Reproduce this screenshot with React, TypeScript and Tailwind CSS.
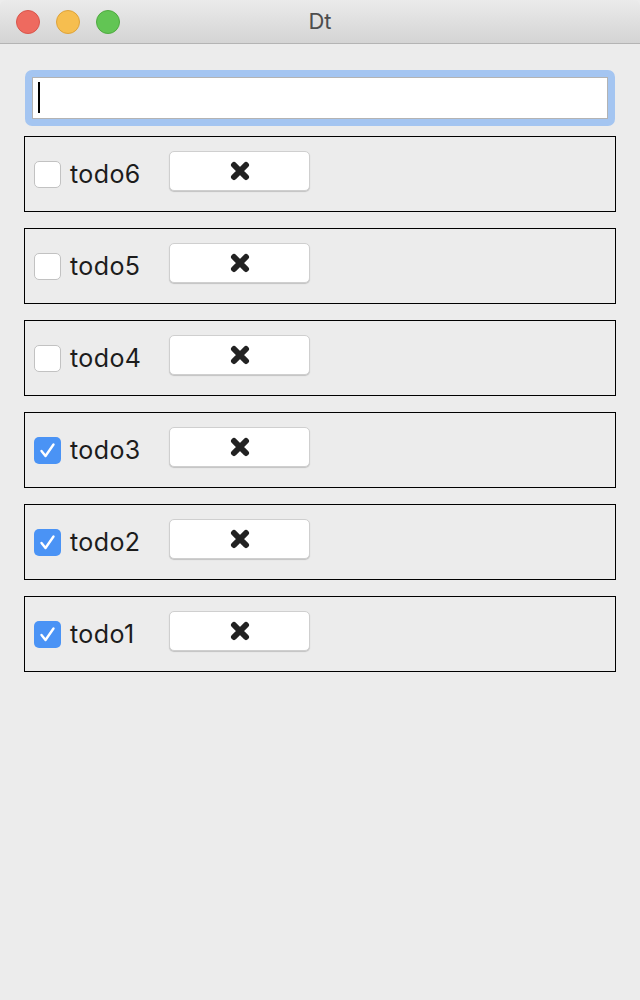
import React from 'react';

const todos = [
    { id: 6, label: 'todo6', done: false },
    { id: 5, label: 'todo5', done: false },
    { id: 4, label: 'todo4', done: false },
    { id: 3, label: 'todo3', done: true },
    { id: 2, label: 'todo2', done: true },
    { id: 1, label: 'todo1', done: true },
];

function Checkbox({ checked }: { checked: boolean }) {
    if (checked) {
        return (
            <div className="w-[27px] h-[27px] rounded-[5px] bg-[#4a93f5] flex items-center justify-center shrink-0">
                <svg width="27" height="27" viewBox="0 0 27 27">
                    <path d="M7.5 14 L11.5 19 L19.5 7.5" fill="none" stroke="#ffffff" strokeWidth="2.4" strokeLinecap="round" strokeLinejoin="round" />
                </svg>
            </div>
        );
    }
    return <div className="w-[27px] h-[27px] rounded-[5px] bg-white border border-[#c2c2c2] shrink-0" />;
}

function RemoveButton() {
    return (
        <button className="w-[141px] h-[40px] mb-[6px] bg-white rounded-[5px] border border-[#cfcfcf] shadow-[0_1px_1px_rgba(0,0,0,0.18)] flex items-center justify-center">
            <svg width="20" height="20" viewBox="0 0 20 20">
                <path d="M4 4 L16 16 M16 4 L4 16" stroke="#222222" strokeWidth="6" strokeLinecap="round" />
            </svg>
        </button>
    );
}

export default function App() {
    return (
        <div className="w-[640px] h-[1000px] bg-[#ececec] flex flex-col" style={{ fontFamily: 'Inter, "Liberation Sans", sans-serif' }}>
            {/* title bar */}
            <div className="h-[44px] shrink-0 relative flex items-center rounded-t-[6px] border-b border-[#b4b4b4] bg-gradient-to-b from-[#ebebeb] to-[#d4d4d4]">
                <div className="flex items-center gap-[16px] pl-[16px]">
                    <div className="w-[24px] h-[24px] rounded-full bg-[#ee6a5f] border border-[#d9554b]" />
                    <div className="w-[24px] h-[24px] rounded-full bg-[#f6be4f] border border-[#dea33a]" />
                    <div className="w-[24px] h-[24px] rounded-full bg-[#62c554] border border-[#4faa40]" />
                </div>
                <div className="absolute inset-0 flex items-center justify-center text-[22px] text-[#4d4d4d]">Dt</div>
            </div>

            <div className="px-[24px] pt-[26px] flex flex-col">
                {/* input with focus ring */}
                <div className="mx-[1px] p-[7px] rounded-[7px] bg-[#a4c5f1]">
                    <div className="h-[42px] bg-white border border-[#b3b3b3] pl-[5px] pt-[4px]">
                        <div className="w-[2px] h-[31px] bg-black" />
                    </div>
                </div>

                <div className="mt-[10px] flex flex-col gap-[16px]">
                    {todos.map((t) => (
                        <div key={t.id} className="h-[76px] border border-black flex items-center pl-[9px]">
                            <Checkbox checked={t.done} />
                            <span className="ml-[9px] w-[99px] shrink-0 pt-[2px] text-[25px] text-[#1c1c1c] tracking-[0.4px]">{t.label}</span>
                            <RemoveButton />
                        </div>
                    ))}
                </div>
            </div>
        </div>
    );
}
